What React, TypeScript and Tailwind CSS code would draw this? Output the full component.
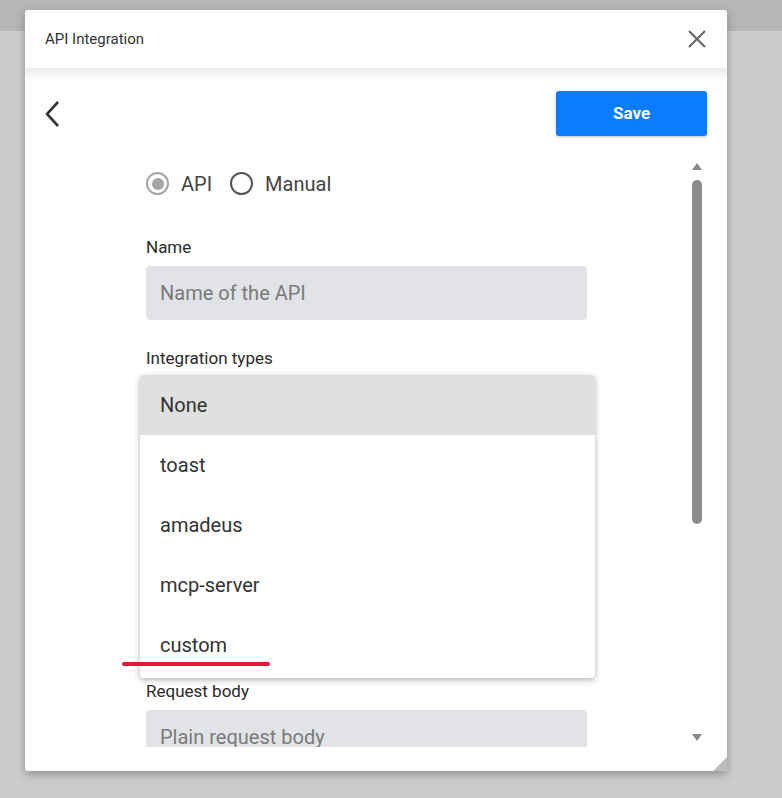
import React from 'react';

const fields = [
  { label: 'Name', placeholder: 'Name of the API' },
  { label: 'Integration types', placeholder: '', hidden: false },
  { label: 'URL', placeholder: '', hidden: true },
  { label: 'Method', placeholder: '', hidden: true },
  { label: 'Request body', placeholder: 'Plain request body' },
];

const options = ['None', 'toast', 'amadeus', 'mcp-server', 'custom'];

function Radio({ checked, label }: { checked?: boolean; label: string }) {
  return (
    <label className="flex items-center gap-[12px]">
      {checked ? (
        <span className="flex h-[23px] w-[23px] items-center justify-center rounded-full border-2 border-[#a5a5a5]">
          <span className="h-[12px] w-[12px] rounded-full bg-[#a5a5a5]" />
        </span>
      ) : (
        <span className="h-[23px] w-[23px] rounded-full border-2 border-[#555]" />
      )}
      <span className="text-[20px] leading-[22px] text-[#444]">{label}</span>
    </label>
  );
}

export default function App() {
  return (
    <div
      className="relative h-[798px] w-[782px] overflow-hidden bg-[#cccccc]"
      style={{ fontFamily: 'Roboto, "Liberation Sans", sans-serif' }}
    >
      <div className="h-[31px] bg-[#b6b6b6]" />

      {/* dialog */}
      <div className="absolute left-[25px] top-[10px] flex h-[761px] w-[702px] flex-col rounded-[3px] bg-white shadow-[0_4px_10px_rgba(0,0,0,0.28)]">
        <div className="flex h-[58px] items-center justify-between pl-[20px] pr-[20px]">
          <span className="text-[15px] text-[#333]">API Integration</span>
          <svg width="20" height="20" viewBox="0 0 20 20">
            <path d="M2 2 L18 18 M18 2 L2 18" stroke="#666" strokeWidth="2" />
          </svg>
        </div>
        <div className="h-[12px] bg-gradient-to-b from-[#ebebeb] to-white" />

        <div className="flex h-[80px] items-start justify-between px-[20px]">
          <svg width="16" height="28" viewBox="0 0 16 28" className="mt-[20px]">
            <polyline points="13,2 2,14 13,26" fill="none" stroke="#333" strokeWidth="2.6" />
          </svg>
          <button className="mt-[11px] h-[45px] w-[151px] rounded-[3px] bg-[#0a7cff] text-[17px] font-bold text-white shadow-[0_1px_3px_rgba(0,0,0,0.25)]">
            Save
          </button>
        </div>

        <div className="flex h-[587px] overflow-hidden">
          <div className="relative flex-1 pl-[121px] pt-[12px]">
            <div className="flex items-center gap-[18px]">
              <Radio checked label="API" />
              <Radio label="Manual" />
            </div>

            <div className="mt-[43px] flex w-[441px] flex-col gap-[29px]">
              {fields.map((f) => (
                <div key={f.label} className={`flex flex-col gap-[10px] ${f.hidden ? 'invisible' : ''}`}>
                  <span className="text-[17px] leading-[18px] text-[#2a2a2a]">{f.label}</span>
                  <div className="flex h-[54px] items-center rounded-[4px] bg-[#e1e3e6] px-[14px] text-[20px] text-[#7a7a7a]">
                    {f.placeholder}
                  </div>
                </div>
              ))}
            </div>

            {/* open select menu */}
            <div className="absolute left-[115px] top-[215px] w-[455px] overflow-hidden rounded-[4px] bg-white shadow-[0_2px_6px_rgba(0,0,0,0.3)]">
              {options.map((o, i) => (
                <div
                  key={o}
                  className={`flex h-[60px] items-center px-[20px] text-[20px] text-[#333] ${i === 0 ? 'bg-[#e0e0e0]' : ''}`}
                >
                  {o}
                </div>
              ))}
              <div className="h-[3px]" />
            </div>

            {/* annotation */}
            <div className="absolute left-[97px] top-[502px] h-[4px] w-[148px] rounded-full bg-[#e8173a]" />
          </div>

          <div className="mr-[24px] flex w-[12px] flex-col items-center pt-[3px]">
            <svg width="10" height="8" viewBox="0 0 10 8">
              <polygon points="5,0 10,7 0,7" fill="#888" />
            </svg>
            <div className="mt-[9px] h-[344px] w-[10px] rounded-full bg-[#8b8b8b]" />
            <div className="flex-1" />
            <svg width="10" height="8" viewBox="0 0 10 8" className="mb-[5px]">
              <polygon points="0,0 10,0 5,7" fill="#888" />
            </svg>
          </div>
        </div>

        <div className="relative flex-1">
          <svg width="14" height="14" viewBox="0 0 14 14" className="absolute bottom-0 right-0">
            <polygon points="14,0 14,14 0,14" fill="#bdbdbd" />
          </svg>
        </div>
      </div>
    </div>
  );
}
